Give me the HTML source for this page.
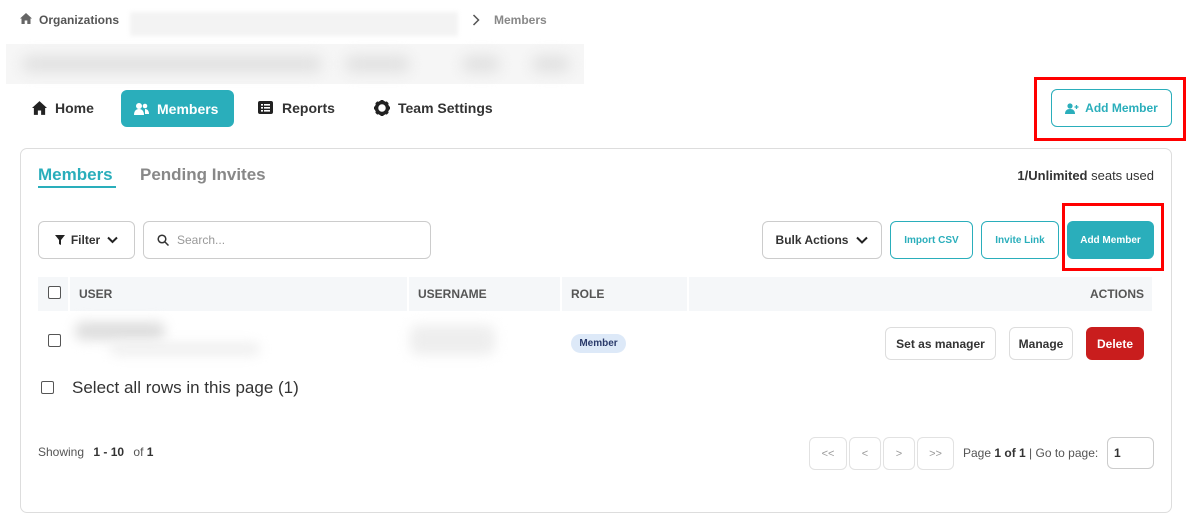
<!DOCTYPE html>
<html><head><meta charset="utf-8"><style>
*{box-sizing:border-box;margin:0;padding:0}
body{width:1187px;height:523px;background:#fff;font-family:"Liberation Sans",sans-serif;position:relative;overflow:hidden;color:#222}
.a{position:absolute}
.b{font-weight:bold}
.btn{position:absolute;border-radius:6px;display:flex;align-items:center;justify-content:center;font-weight:bold}
.blur{position:absolute;background:#ddd;filter:blur(6px);border-radius:8px}
.chk{position:absolute;width:13px;height:13px;border:1.5px solid #555;border-radius:2px;background:#fff}
.th{position:absolute;top:277px;height:34px;background:#f5f7f9;font-size:12px;font-weight:bold;color:#555;display:flex;align-items:center}
.pg{position:absolute;top:437px;height:33px;border:1px solid #e2e2e2;border-radius:6px;color:#999;font-size:11px;display:flex;align-items:center;justify-content:center}
</style></head><body>
<svg class="a" style="left:20px;top:13px" width="12" height="11" viewBox="0 0 12 11"><path d="M6 0L0 5.5h1.5V11h3.2V7.5h2.6V11h3.2V5.5H12z" fill="#666"/></svg>
<div class="a b" style="left:39px;top:13px;font-size:12px;color:#555">Organizations</div>
<div class="a" style="left:130px;top:12px;width:328px;height:24px;background:#f3f3f3;filter:blur(2px)"></div>
<svg class="a" style="left:472px;top:14px" width="8" height="12" viewBox="0 0 8 12"><path d="M1.5 1l5 5-5 5" fill="none" stroke="#555" stroke-width="1.5"/></svg>
<div class="a b" style="left:494px;top:13px;font-size:12px;color:#888">Members</div>
<div class="a" style="left:6px;top:44px;width:578px;height:40px;background:#f6f6f6"></div>
<div class="blur" style="left:22px;top:56px;width:300px;height:16px;background:#e0e0e0;filter:blur(7px)"></div>
<div class="blur" style="left:345px;top:56px;width:65px;height:16px;background:#e0e0e0;filter:blur(7px)"></div>
<div class="blur" style="left:462px;top:56px;width:38px;height:16px;background:#e0e0e0;filter:blur(7px)"></div>
<div class="blur" style="left:532px;top:56px;width:38px;height:16px;background:#e0e0e0;filter:blur(7px)"></div>

<svg class="a" style="left:32px;top:101px" width="15" height="14" viewBox="0 0 12 11"><path d="M6 0L0 5.5h1.5V11h3.2V7.5h2.6V11h3.2V5.5H12z" fill="#222"/></svg>
<div class="a b" style="left:55px;top:100px;font-size:14px;color:#333">Home</div>
<div class="btn" style="left:121px;top:90px;width:113px;height:37px;background:#2aaebb;color:#fff;font-size:14px;justify-content:flex-start;padding-left:13px"><svg width="15" height="14" viewBox="0 0 15 14" style="margin-right:8px"><circle cx="5" cy="4" r="3" fill="#fff"/><path d="M0 13c0-4 2-6 5-6s5 2 5 6z" fill="#fff"/><circle cx="11" cy="4" r="2.3" fill="#fff"/><path d="M11 7c2.5 0 4 2 4 5h-4z" fill="#fff"/></svg>Members</div>
<svg class="a" style="left:258px;top:101px" width="15" height="13" viewBox="0 0 15 13"><rect width="15" height="13" rx="2" fill="#222"/><rect x="3" y="3" width="2" height="1.6" fill="#fff"/><rect x="6" y="3" width="6" height="1.6" fill="#fff"/><rect x="3" y="6" width="2" height="1.6" fill="#fff"/><rect x="6" y="6" width="6" height="1.6" fill="#fff"/><rect x="3" y="9" width="2" height="1.6" fill="#fff"/><rect x="6" y="9" width="6" height="1.6" fill="#fff"/></svg>
<div class="a b" style="left:282px;top:100px;font-size:14px;color:#333">Reports</div>
<svg class="a" style="left:374px;top:100px" width="16" height="16" viewBox="0 0 16 16"><circle cx="8" cy="8" r="5.5" fill="none" stroke="#222" stroke-width="3.5"/><g stroke="#222" stroke-width="3"><path d="M8 0v3M8 13v3M0 8h3M13 8h3M2.3 2.3l2 2M11.7 11.7l2 2M2.3 13.7l2-2M11.7 4.3l2-2"/></g></svg>
<div class="a b" style="left:398px;top:100px;font-size:14px;color:#333">Team Settings</div>

<div class="btn" style="left:1051px;top:89px;width:121px;height:38px;border:1px solid #2aaebb;color:#2aaebb;font-size:12px"><svg width="14" height="11" viewBox="0 0 14 11" style="margin-right:6px"><circle cx="5" cy="3" r="2.6" fill="#2aaebb"/><path d="M0 11c0-3.5 2-5 5-5s5 1.5 5 5z" fill="#2aaebb"/><path d="M11.5 2v4M9.5 4h4" stroke="#2aaebb" stroke-width="1.3"/></svg>Add Member</div>
<div class="a" style="left:1034px;top:77px;width:152px;height:64px;border:3px solid #f00"></div>

<div class="a" style="left:20px;top:148px;width:1152px;height:365px;border:1px solid #ddd;border-radius:7px"></div>
<div class="a b" style="left:38px;top:165px;font-size:17px;color:#2aaebb">Members</div>
<div class="a" style="left:38px;top:186px;width:78px;height:2px;background:#2aaebb"></div>
<div class="a b" style="left:140px;top:165px;font-size:17px;color:#888">Pending Invites</div>
<div class="a" style="right:33px;top:168px;font-size:13px;color:#333"><b>1/Unlimited</b> seats used</div>

<div class="btn" style="left:38px;top:221px;width:97px;height:38px;border:1px solid #ccc;font-size:12px;color:#333"><svg width="10" height="10" viewBox="0 0 10 10" style="margin-right:6px"><path d="M0 0h10L6 5v5L4 9V5z" fill="#222"/></svg>Filter<svg width="11" height="8" viewBox="0 0 11 8" style="margin-left:7px"><path d="M1 1.5l4.5 4.5 4.5-4.5" fill="none" stroke="#222" stroke-width="2"/></svg></div>
<div class="a" style="left:143px;top:221px;width:288px;height:38px;border:1px solid #ccc;border-radius:6px"></div>
<svg class="a" style="left:157px;top:234px" width="12" height="12" viewBox="0 0 12 12"><circle cx="5" cy="5" r="3.8" fill="none" stroke="#333" stroke-width="1.5"/><path d="M8 8l3.5 3.5" stroke="#333" stroke-width="1.5"/></svg>
<div class="a" style="left:177px;top:233px;font-size:12px;color:#999">Search...</div>

<div class="btn" style="left:762px;top:221px;width:120px;height:38px;border:1px solid #ccc;font-size:12px;color:#333">Bulk Actions<svg width="12" height="8" viewBox="0 0 12 8" style="margin-left:8px"><path d="M1 1.5l5 5 5-5" fill="none" stroke="#222" stroke-width="2"/></svg></div>
<div class="btn" style="left:890px;top:221px;width:83px;height:38px;border:1px solid #2aaebb;color:#2aaebb;font-size:10px">Import CSV</div>
<div class="btn" style="left:981px;top:221px;width:78px;height:38px;border:1px solid #2aaebb;color:#2aaebb;font-size:10px">Invite Link</div>
<div class="btn" style="left:1067px;top:221px;width:87px;height:38px;background:#2aaebb;color:#fff;font-size:10px">Add Member</div>
<div class="a" style="left:1062px;top:203px;width:102px;height:68px;border:3px solid #f00"></div>

<div class="th" style="left:38px;width:30px"></div>
<div class="chk" style="left:48px;top:286px"></div>
<div class="th" style="left:70px;width:337px;padding-left:9px">USER</div>
<div class="th" style="left:409px;width:151px;padding-left:9px">USERNAME</div>
<div class="th" style="left:562px;width:125px;padding-left:9px">ROLE</div>
<div class="th" style="left:689px;width:463px;justify-content:flex-end;padding-right:8px">ACTIONS</div>

<div class="chk" style="left:48px;top:334px"></div>
<div class="blur" style="left:75px;top:322px;width:90px;height:18px"></div>
<div class="blur" style="left:110px;top:343px;width:150px;height:12px;background:#eee"></div>
<div class="blur" style="left:410px;top:325px;width:85px;height:30px;background:#eee"></div>
<div class="a b" style="left:571px;top:334px;width:55px;height:19px;border-radius:10px;background:#dde9f8;color:#2a3a6a;font-size:10px;display:flex;align-items:center;justify-content:center">Member</div>
<div class="btn" style="left:885px;top:327px;width:111px;height:33px;border:1px solid #ddd;font-size:12px;color:#333">Set as manager</div>
<div class="btn" style="left:1009px;top:327px;width:64px;height:33px;border:1px solid #ddd;font-size:12px;color:#333">Manage</div>
<div class="btn" style="left:1086px;top:327px;width:58px;height:33px;background:#c91d1d;color:#fff;font-size:12px">Delete</div>

<div class="chk" style="left:41px;top:381px"></div>
<div class="a" style="left:72px;top:378px;font-size:17px;color:#333">Select all rows in this page (1)</div>

<div class="a" style="left:38px;top:445px;font-size:12px;color:#555">Showing <b style="margin-left:6px;color:#333">1 - 10</b> <span style="margin-left:6px">of</span> <b style="color:#333">1</b></div>
<div class="pg" style="left:809px;width:38px">&lt;&lt;</div>
<div class="pg" style="left:849px;width:32px">&lt;</div>
<div class="pg" style="left:883px;width:32px">&gt;</div>
<div class="pg" style="left:917px;width:37px">&gt;&gt;</div>
<div class="a" style="left:963px;top:446px;font-size:12px;color:#555">Page <b style="color:#333">1 of 1</b> | Go to page:</div>
<div class="a b" style="left:1107px;top:437px;width:47px;height:32px;border:1px solid #ccc;border-radius:6px;font-size:12px;padding:8px 0 0 6px;color:#333">1</div>
</body></html>
